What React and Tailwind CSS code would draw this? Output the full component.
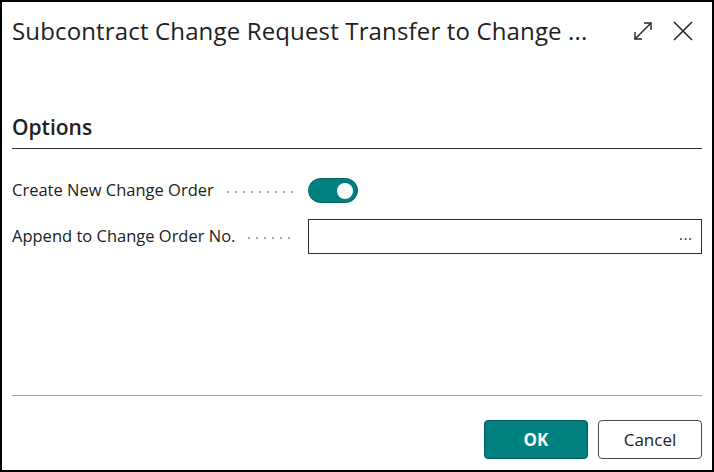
import React from "react";

export default function App() {
  const font = { fontFamily: '"Open Sans", "Noto Sans", sans-serif' };
  return (
    <div
      className="w-[714px] h-[472px] border-2 border-black bg-white flex flex-col text-[#212121] box-border"
      style={font}
    >
      {/* Header */}
      <div className="h-[58px] flex items-center pl-[10px] pr-[18px]">
        <div className="flex-1 text-[24px] leading-none tracking-[0.15px] whitespace-nowrap">
          Subcontract Change Request Transfer to Change ...
        </div>
        <svg width="22" height="22" viewBox="0 0 22 22" className="ml-2 mr-[18px]" fill="none" stroke="#262626" strokeWidth="1.4">
          <path d="M3 19 L19 3" />
          <path d="M12 3 H19 V10" />
          <path d="M3 12 V19 H10" />
        </svg>
        <svg width="22" height="22" viewBox="0 0 22 22" fill="none" stroke="#262626" strokeWidth="1.6">
          <path d="M2 2 L20 20" />
          <path d="M20 2 L2 20" />
        </svg>
      </div>

      {/* Options */}
      <div className="px-[10px] mt-[57px]">
        <div className="text-[21px] font-semibold leading-none pb-[10px] border-b border-[#303030]">Options</div>

        <div className="mt-[29px] flex items-center h-[25px]">
          <div className="w-[284px] flex items-center">
            <span className="text-[16.5px] whitespace-nowrap">Create New Change Order</span>
            <span className="flex-1 ml-[10px] h-[2px] bg-[radial-gradient(circle,#a8a8a8_0.8px,transparent_1px)] bg-[length:8px_2px] bg-repeat-x mt-[3px]"></span>
          </div>
          <div className="ml-[12px] w-[50px] h-[25px] rounded-full bg-[#00807f] border border-[#006363] flex items-center justify-end pr-[4px]">
            <div className="w-[16px] h-[16px] rounded-full bg-white"></div>
          </div>
        </div>

        <div className="mt-[16px] flex items-center h-[35px]">
          <div className="w-[284px] flex items-center">
            <span className="text-[16.5px] whitespace-nowrap">Append to Change Order No.</span>
            <span className="flex-1 ml-[10px] h-[2px] bg-[radial-gradient(circle,#a8a8a8_0.8px,transparent_1px)] bg-[length:8px_2px] bg-repeat-x mt-[3px]"></span>
          </div>
          <div className="ml-[12px] flex-1 h-[35px] border border-[#2b3035] flex items-center justify-end pr-[8px]">
            <span className="text-[14px] leading-none tracking-[1px] text-[#222] -mt-[4px]">...</span>
          </div>
        </div>
      </div>

      <div className="flex-1"></div>

      {/* Footer */}
      <div className="px-[10px]">
        <div className="border-t border-[#a0a0a0]"></div>
        <div className="flex justify-end gap-[10px] pt-[24px] pb-[11px]">
          <button className="w-[104px] h-[39px] rounded-[4px] bg-[#00807f] border border-[#005d5c] text-white font-bold text-[17px]">
            OK
          </button>
          <button className="w-[104px] h-[39px] rounded-[4px] bg-white border border-[#4a4a4a] text-[#212121] text-[17px]">
            Cancel
          </button>
        </div>
      </div>
    </div>
  );
}
